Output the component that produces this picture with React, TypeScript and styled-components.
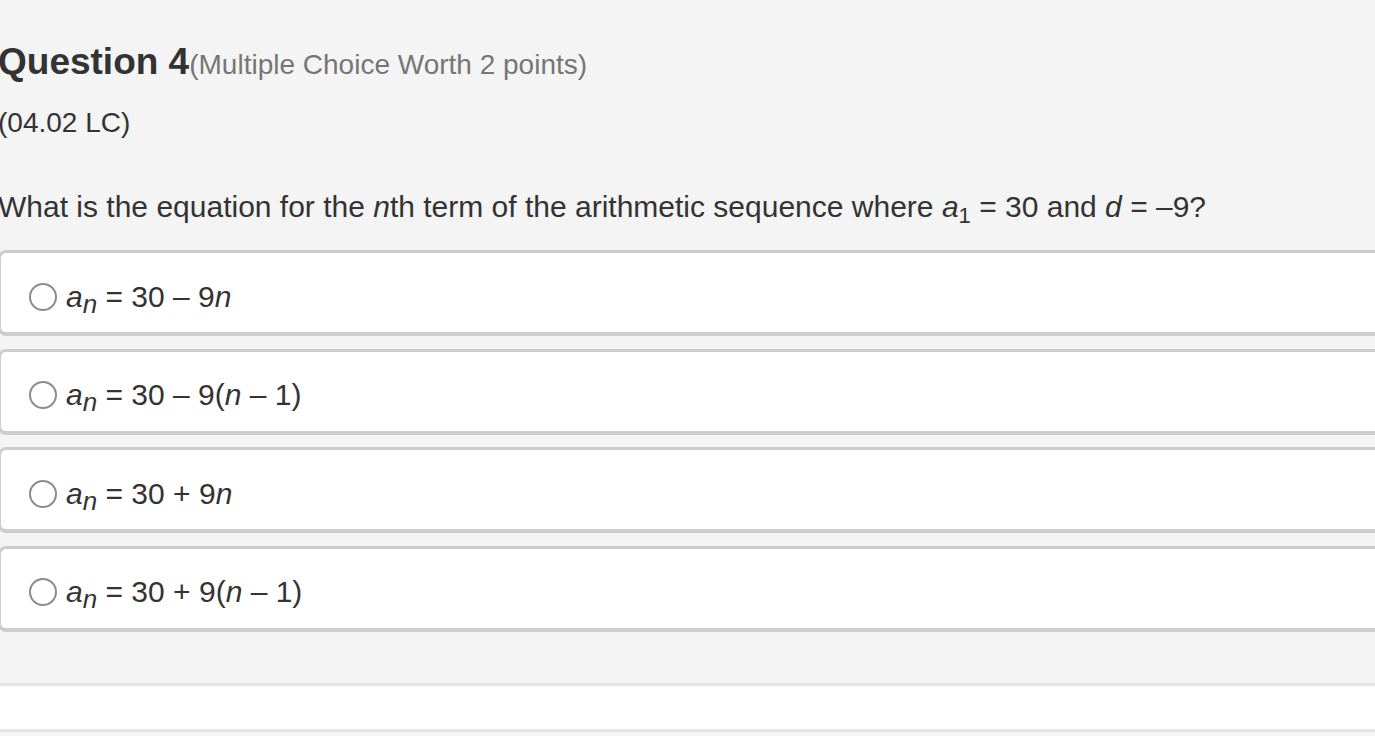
import styled, { createGlobalStyle } from "styled-components";

const GlobalStyle = createGlobalStyle`
    html, body {
        margin: 0;
        padding: 0;
        background: #f4f4f4;
        overflow: hidden;
    }
    body {
        font-family: "Liberation Sans", Arial, Helvetica, sans-serif;
        color: #333;
    }
`;

const Page = styled.div`
    margin-left: -2px;
    width: calc(100% + 60px);
    padding-top: 42px;
`;

const Heading = styled.h2`
    margin: 0;
    font-size: 37px;
    line-height: 40px;
    font-weight: bold;
    color: #333;
`;

const Worth = styled.span`
    font-size: 28px;
    line-height: 40px;
    font-weight: normal;
    color: #767676;
`;

const Standard = styled.div`
    margin-top: 18px;
    font-size: 28px;
    line-height: 40px;
`;

const Prompt = styled.p`
    margin: 44px 0 0;
    font-size: 30px;
    line-height: 40px;
`;

const Var = styled.i`
    font-style: italic;
`;

const Sub = styled.sub<{ $italic?: boolean; $size: number }>`
    font-size: ${(p) => p.$size}px;
    line-height: 0;
    vertical-align: -6px;
    font-style: ${(p) => (p.$italic ? "italic" : "normal")};
`;

const OptionList = styled.div`
    margin-top: 23px;
    display: flex;
    flex-direction: column;
    gap: 12.6px;
`;

const Card = styled.label`
    box-sizing: border-box;
    height: 86px;
    display: flex;
    align-items: center;
    gap: 9px;
    padding: 8px 0 0 28px;
    background: #fff;
    border: 3px solid #cdcdcd;
    border-bottom-width: 4px;
    border-radius: 8px;
    font-size: 30px;
    line-height: 30px;
    cursor: pointer;
`;

const Radio = styled.span`
    box-sizing: border-box;
    flex: none;
    width: 28px;
    height: 28px;
    border-radius: 50%;
    border: 2.5px solid #8c8c8c;
    background: #fff;
`;

const Footer = styled.div`
    margin-top: 51px;
    height: 43px;
    background: #fff;
    border-top: 3px solid #e4e4e4;
    border-bottom: 3px solid #e4e4e4;
`;

type Option = { sign: string; shifted: boolean };

const options: Option[] = [
    { sign: "–", shifted: false },
    { sign: "–", shifted: true },
    { sign: "+", shifted: false },
    { sign: "+", shifted: true },
];

const Equation = ({ sign, shifted }: Option) => (
    <span>
        <Var>a</Var>
        <Sub $italic $size={26}>n</Sub> = 30 {sign} 9
        {shifted ? (
            <>
                (<Var>n</Var> – 1)
            </>
        ) : (
            <Var>n</Var>
        )}
    </span>
);

export default function App() {
    return (
        <>
            <GlobalStyle />
            <Page>
                <Heading>
                    Question 4<Worth>(Multiple Choice Worth 2 points)</Worth>
                </Heading>
                <Standard>(04.02 LC)</Standard>
                <Prompt>
                    What is the equation for the <Var>n</Var>th term of the arithmetic sequence where{" "}
                    <Var>a</Var>
                    <Sub $size={22}>1</Sub> = 30 and <Var>d</Var> = –9?
                </Prompt>
                <OptionList>
                    {options.map((o, i) => (
                        <Card key={i}>
                            <Radio />
                            <Equation {...o} />
                        </Card>
                    ))}
                </OptionList>
                <Footer />
            </Page>
        </>
    );
}
